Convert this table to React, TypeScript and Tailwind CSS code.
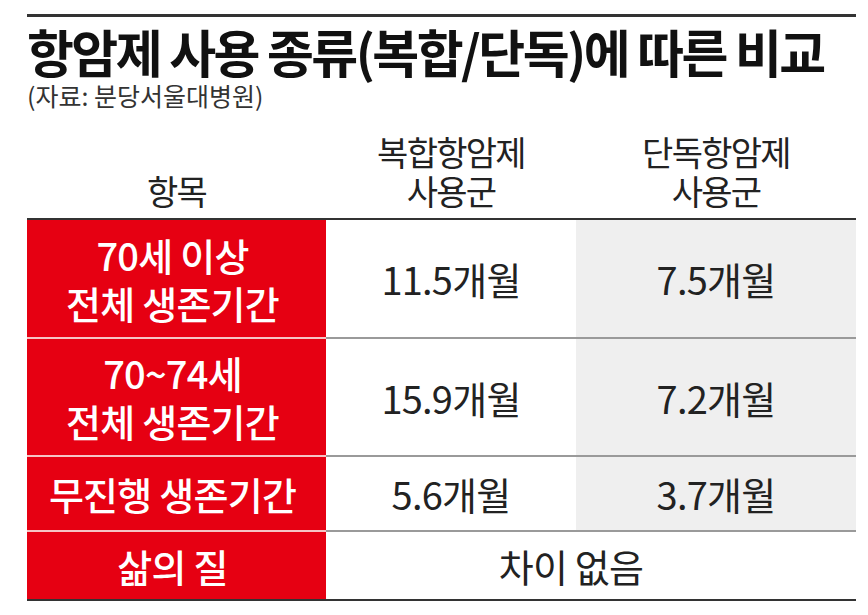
import * as React from 'react';

const rows = [
  { label: ['70세 이상', '전체 생존기간'], combo: '11.5개월', single: '7.5개월', h: 'h-[117px]' },
  { label: ['70~74세', '전체 생존기간'], combo: '15.9개월', single: '7.2개월', h: 'h-[118px]' },
  { label: ['무진행 생존기간'], combo: '5.6개월', single: '3.7개월', h: 'h-[75px]' },
];

export default function App() {
  return (
    <div
      className="h-[615px] w-[868px] bg-white pl-[27px] pt-[14px] text-[#1c1c1c]"
      style={{ fontFamily: '"Noto Sans CJK KR", "Noto Sans", sans-serif' }}
    >
      <div className="w-[829px]">
        <div className="h-[3px] bg-[#333]" />
        <h1 className="mt-[9px] whitespace-nowrap text-[51px] font-bold leading-none tracking-[-0.05em] text-[#111]">
          항암제 사용 종류(복합/단독)에 따른 비교
        </h1>
        <p className="mt-[6px] text-[25px] leading-none tracking-normal text-[#333]">
          (자료: 분당서울대병원)
        </p>

        <div className="grid grid-cols-[299px_250px_280px] text-[34px] leading-[39px] tracking-[-0.05em] text-[#222]">
          <div className="flex h-[110px] items-end justify-center pb-[8px]">항목</div>
          <div className="flex h-[110px] items-end justify-center pb-[8px] text-center">
            <p>
              복합항암제
              <br />
              사용군
            </p>
          </div>
          <div className="flex h-[110px] items-end justify-center pb-[8px] text-center">
            <p>
              단독항암제
              <br />
              사용군
            </p>
          </div>
        </div>

        <div className="grid grid-cols-[299px_250px_280px] border-y-2 border-[#333] text-[38px] tracking-[-0.02em]">
          {rows.map((row, i) => (
            <React.Fragment key={row.combo}>
              <div
                className={`flex ${row.h} items-center justify-center bg-[#e60012] pr-[8px] text-center font-medium leading-[48px] text-white ${
                  i > 0 ? 'border-t-2 border-[#f6c4c4]' : ''
                }`}
              >
                <p>
                  {row.label[0]}
                  {row.label[1] ? <br /> : null}
                  {row.label[1]}
                </p>
              </div>
              <div
                className={`flex ${row.h} items-center justify-center text-[#222] ${
                  i > 0 ? 'border-t-2 border-[#9a9a9a]' : ''
                }`}
              >
                {row.combo}
              </div>
              <div
                className={`flex ${row.h} items-center justify-center bg-[#efefef] text-[#222] ${
                  i > 0 ? 'border-t-2 border-[#9a9a9a]' : ''
                }`}
              >
                {row.single}
              </div>
            </React.Fragment>
          ))}
          <div className="flex h-[69px] items-center justify-center border-t-2 border-[#f6c4c4] bg-[#e60012] pr-[8px] font-medium text-white">
            삶의 질
          </div>
          <div className="col-span-2 flex h-[69px] items-center justify-center border-t-2 border-[#9a9a9a] pr-[40px] text-[#222]">
            차이 없음
          </div>
        </div>
      </div>
    </div>
  );
}
